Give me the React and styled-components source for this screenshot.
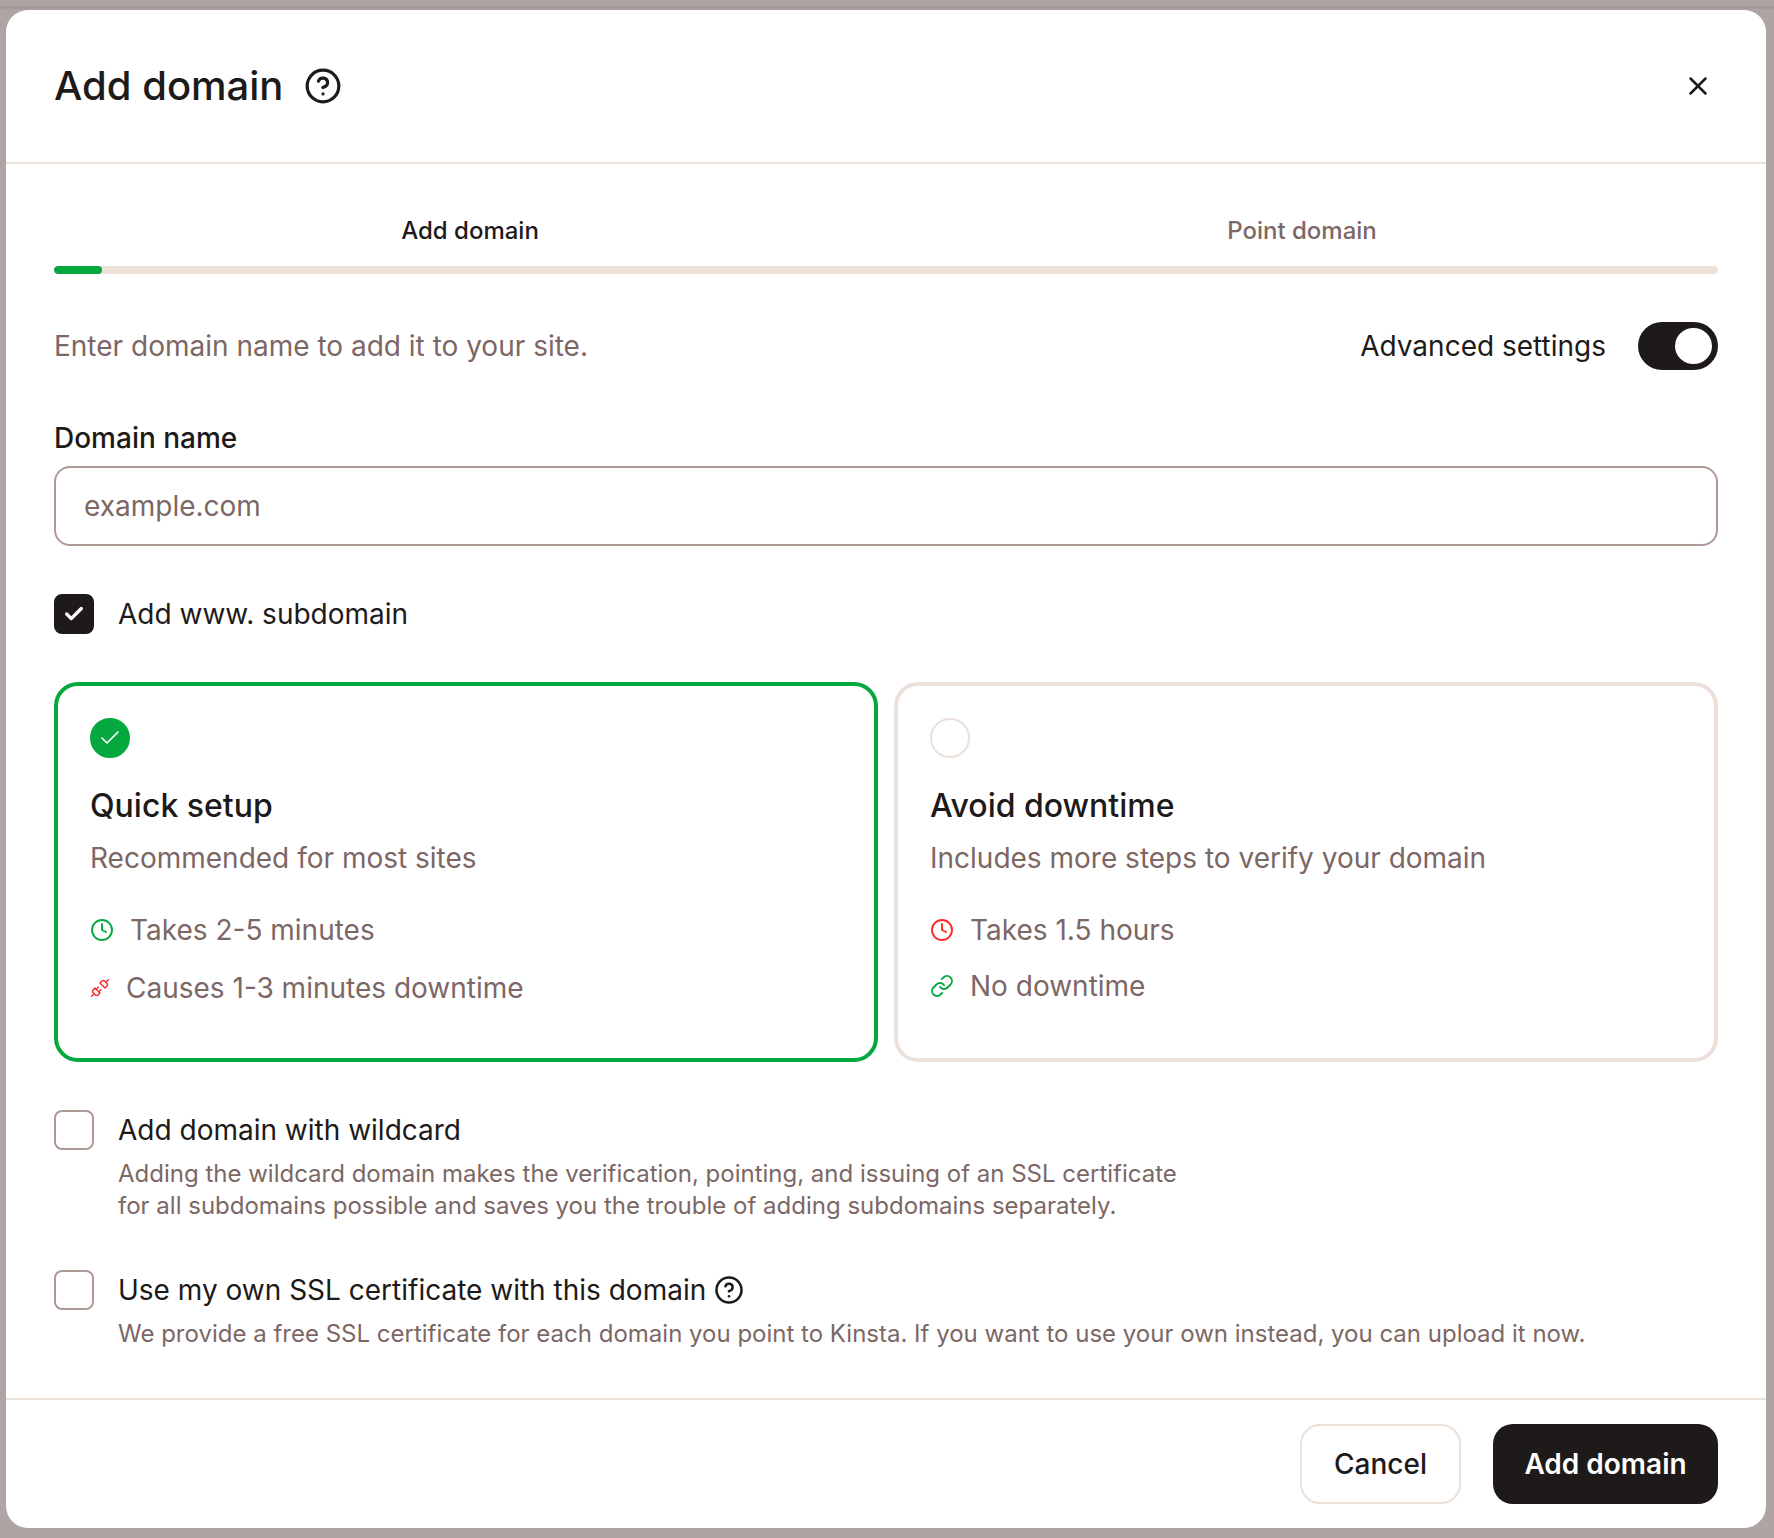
import React from 'react';
import styled, { createGlobalStyle } from 'styled-components';
import { Check, CircleHelp, Clock, Link, Unplug, X } from 'lucide-react';

const GlobalStyle = createGlobalStyle`
  html, body {
    margin: 0;
    padding: 0;
    background: #afa4a4;
  }
  * {
    box-sizing: border-box;
  }
`;

const ink = '#1d1a19';
const muted = '#7c6765';
const line = '#ebe0da';
const outline = '#ad9995';
const green = '#05a83f';
const red = '#fb2a2a';

const App = () => {
  return (
    <Page>
      <GlobalStyle />
      <Modal>
        <Header>
          <TitleWrap>
            <Title>Add domain</Title>
            <CircleHelp size={38} strokeWidth={2} color={ink} />
          </TitleWrap>
          <CloseBtn>
            <X size={30} strokeWidth={2} color={ink} />
          </CloseBtn>
        </Header>

        <Body>
          <Steps>
            <StepLabel $active>Add domain</StepLabel>
            <StepLabel>Point domain</StepLabel>
          </Steps>
          <Track>
            <TrackFill />
          </Track>

          <IntroRow>
            <Intro>Enter domain name to add it to your site.</Intro>
            <ToggleWrap>
              <ToggleLabel>Advanced settings</ToggleLabel>
              <Toggle>
                <Knob />
              </Toggle>
            </ToggleWrap>
          </IntroRow>

          <FieldLabel htmlFor="domain">Domain name</FieldLabel>
          <Input id="domain" placeholder="example.com" readOnly />

          <WwwRow>
            <CheckBox $checked>
              <Check size={22} strokeWidth={3.6} color="#fff" />
            </CheckBox>
            <CheckText>Add www. subdomain</CheckText>
          </WwwRow>

          <Cards>
            <Card $selected>
              <Radio $selected>
                <Check size={24} strokeWidth={1.6} color="#fff" />
              </Radio>
              <CardTitle>Quick setup</CardTitle>
              <CardSub>Recommended for most sites</CardSub>
              <Items $gap={22}>
                <Item>
                  <Clock size={24} strokeWidth={1.9} color={green} />
                  <span>Takes 2-5 minutes</span>
                </Item>
                <Item>
                  <Unplug size={20} strokeWidth={1.7} color={red} />
                  <span>Causes 1-3 minutes downtime</span>
                </Item>
              </Items>
            </Card>
            <Card>
              <Radio />
              <CardTitle>Avoid downtime</CardTitle>
              <CardSub>Includes more steps to verify your domain</CardSub>
              <Items $gap={20}>
                <Item>
                  <Clock size={24} strokeWidth={1.9} color={red} />
                  <span>Takes 1.5 hours</span>
                </Item>
                <Item>
                  <Link size={24} strokeWidth={1.9} color={green} />
                  <span>No downtime</span>
                </Item>
              </Items>
            </Card>
          </Cards>

          <OptionRow $top={48}>
            <CheckBox />
            <OptionText>
              <CheckText>Add domain with wildcard</CheckText>
              <OptionDesc>
                Adding the wildcard domain makes the verification, pointing, and issuing of an SSL certificate
                <br />
                for all subdomains possible and saves you the trouble of adding subdomains separately.
              </OptionDesc>
            </OptionText>
          </OptionRow>

          <OptionRow $top={48}>
            <CheckBox />
            <OptionText>
              <CheckText>
                Use my own SSL certificate with this domain
                <CircleHelp size={30} strokeWidth={2} color={ink} />
              </CheckText>
              <OptionDesc>
                We provide a free SSL certificate for each domain you point to Kinsta. If you want to use your own
                instead, you can upload it now.
              </OptionDesc>
            </OptionText>
          </OptionRow>
        </Body>

        <Footer>
          <CancelBtn>Cancel</CancelBtn>
          <SubmitBtn>Add domain</SubmitBtn>
        </Footer>
      </Modal>
    </Page>
  );
};

export default App;

const Page = styled.div`
  width: 1774px;
  height: 1538px;
  padding: 10px 8px 10px 6px;
  background: linear-gradient(#afa4a4 0 6px, #a59a9a 6px 9px, #afa4a4 9px);
  font-family: Inter, 'Liberation Sans', sans-serif;
  color: ${ink};
  overflow: hidden;
`;
const Modal = styled.div`
  width: 1760px;
  height: 1518px;
  background: #fff;
  border-radius: 22px;
  display: flex;
  flex-direction: column;
`;
const Header = styled.div`
  height: 154px;
  flex: none;
  padding: 0 48px;
  border-bottom: 2px solid ${line};
  display: flex;
  align-items: center;
  justify-content: space-between;
`;
const TitleWrap = styled.div`
  display: flex;
  align-items: center;
  gap: 21px;
`;
const Title = styled.h1`
  margin: 0;
  font-size: 40px;
  line-height: 48px;
  font-weight: 500;
`;
const CloseBtn = styled.button`
  width: 30px;
  height: 30px;
  padding: 0;
  border: none;
  background: none;
  display: flex;
  margin-right: 5px;
`;
const Body = styled.div`
  flex: 1;
  padding: 0 48px;
  display: flex;
  flex-direction: column;
`;
const Steps = styled.div`
  display: grid;
  grid-template-columns: 1fr 1fr;
  margin-top: 51px;
`;
const StepLabel = styled.div`
  text-align: center;
  font-size: 24px;
  line-height: 32px;
  font-weight: 500;
  color: ${(p) => (p.$active ? ink : muted)};
`;
const Track = styled.div`
  height: 8px;
  margin-top: 19px;
  background: ${line};
  border-radius: 4px;
  overflow: hidden;
`;
const TrackFill = styled.div`
  width: 48px;
  height: 100%;
  background: ${green};
  border-radius: 4px;
`;
const IntroRow = styled.div`
  display: flex;
  align-items: center;
  justify-content: space-between;
  margin-top: 48px;
`;
const Intro = styled.p`
  margin: 0;
  font-size: 28px;
  line-height: 40px;
  color: ${muted};
`;
const ToggleWrap = styled.div`
  display: flex;
  align-items: center;
  gap: 32px;
`;
const ToggleLabel = styled.span`
  font-size: 28px;
  line-height: 40px;
`;
const Toggle = styled.div`
  width: 80px;
  height: 48px;
  padding: 6px 6px;
  border-radius: 24px;
  background: ${ink};
  display: flex;
  justify-content: flex-end;
`;
const Knob = styled.div`
  width: 37px;
  height: 36px;
  border-radius: 50%;
  background: #fff;
`;
const FieldLabel = styled.label`
  margin-top: 48px;
  font-size: 28px;
  line-height: 40px;
  font-weight: 500;
`;
const Input = styled.input`
  height: 80px;
  margin-top: 8px;
  padding: 0 28px;
  border: 2px solid ${outline};
  border-radius: 16px;
  background: #fff;
  font: 400 28px Inter, sans-serif;
  outline: none;
  &::placeholder {
    color: ${muted};
    opacity: 1;
  }
`;
const WwwRow = styled.div`
  display: flex;
  align-items: center;
  gap: 24px;
  margin-top: 48px;
`;
const CheckBox = styled.div`
  width: 40px;
  height: 40px;
  flex: none;
  border-radius: 8px;
  border: 2px solid ${(p) => (p.$checked ? ink : outline)};
  background: ${(p) => (p.$checked ? ink : '#fff')};
  display: flex;
  align-items: center;
  justify-content: center;
`;
const CheckText = styled.div`
  display: flex;
  align-items: center;
  gap: 8px;
  font-size: 28px;
  line-height: 40px;
`;
const Cards = styled.div`
  display: grid;
  grid-template-columns: 1fr 1fr;
  gap: 16px;
  margin-top: 48px;
`;
const Card = styled.div`
  height: 380px;
  padding: 32px 32px 0;
  border: 4px solid ${(p) => (p.$selected ? green : line)};
  border-radius: 24px;
  background: #fff;
`;
const Radio = styled.div`
  width: 40px;
  height: 40px;
  border-radius: 50%;
  border: 2px solid ${(p) => (p.$selected ? green : line)};
  background: ${(p) => (p.$selected ? green : '#fff')};
  display: flex;
  align-items: center;
  justify-content: center;
`;
const CardTitle = styled.h3`
  margin: 26px 0 0;
  font-size: 32px;
  line-height: 44px;
  font-weight: 500;
`;
const CardSub = styled.p`
  margin: 8px 0 0;
  font-size: 28px;
  line-height: 44px;
  color: ${muted};
`;
const Items = styled.div`
  display: flex;
  flex-direction: column;
  gap: ${(p) => p.$gap}px;
  margin-top: 32px;
`;
const Item = styled.div`
  display: flex;
  align-items: center;
  gap: 16px;
  font-size: 28px;
  line-height: 36px;
  color: ${muted};
`;
const OptionRow = styled.div`
  display: flex;
  align-items: flex-start;
  gap: 24px;
  margin-top: ${(p) => p.$top}px;
`;
const OptionText = styled.div`
  display: flex;
  flex-direction: column;
`;
const OptionDesc = styled.p`
  margin: 8px 0 0;
  font-size: 24px;
  line-height: 32px;
  color: ${muted};
`;
const Footer = styled.div`
  height: 130px;
  flex: none;
  padding: 24px 48px 0;
  border-top: 2px solid ${line};
  display: flex;
  justify-content: flex-end;
  gap: 32px;
`;
const CancelBtn = styled.button`
  width: 161px;
  height: 80px;
  border: 2px solid ${line};
  border-radius: 20px;
  background: #fff;
  color: ${ink};
  font: 500 28px Inter, sans-serif;
`;
const SubmitBtn = styled.button`
  width: 225px;
  height: 80px;
  border: none;
  border-radius: 20px;
  background: ${ink};
  color: #fff;
  font: 600 28px Inter, sans-serif;
`;
